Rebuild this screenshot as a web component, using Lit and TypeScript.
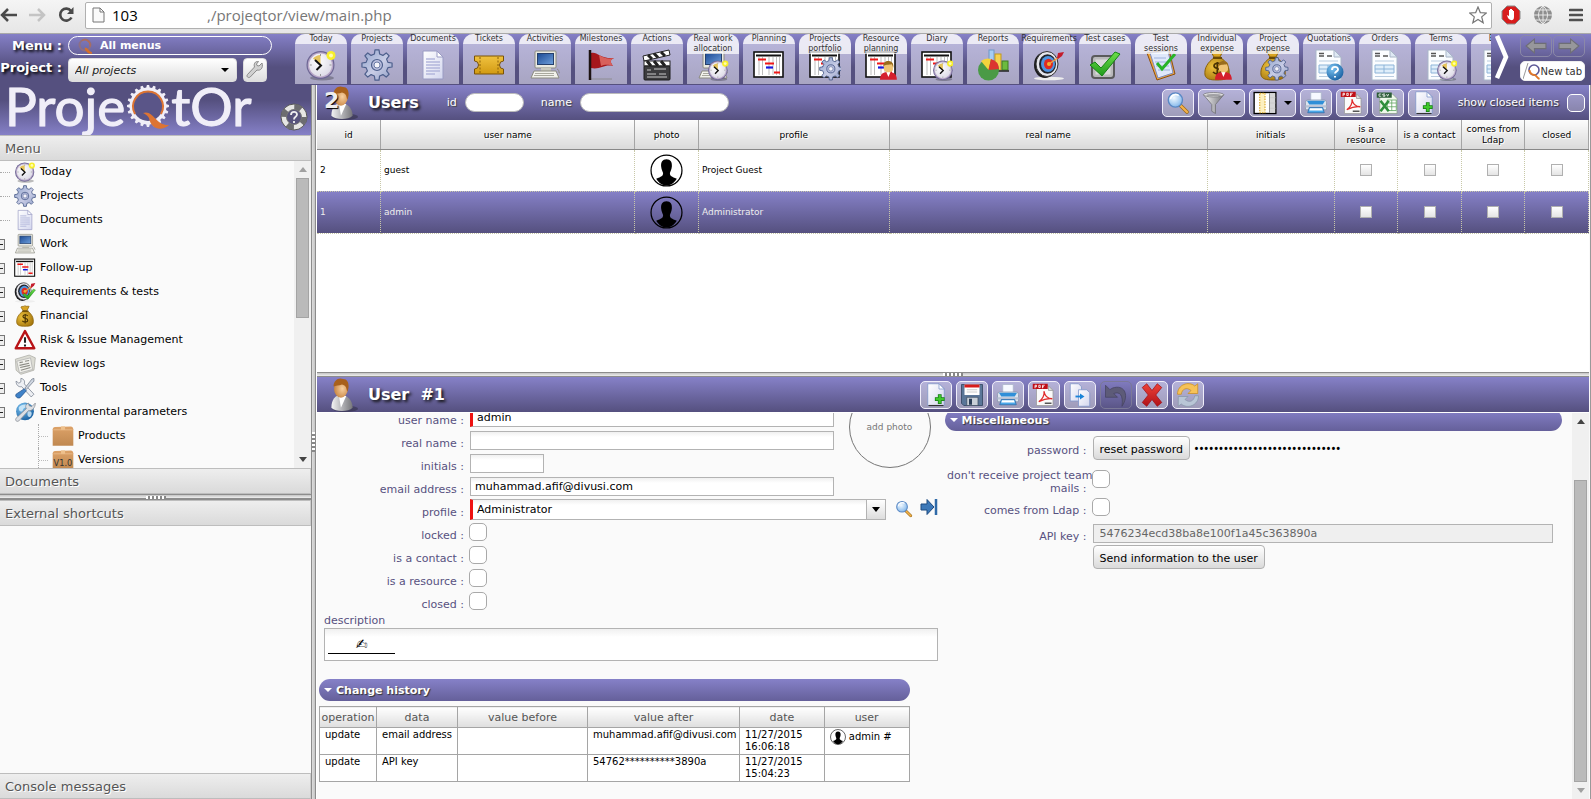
import { LitElement, html, svg, css, nothing, TemplateResult, SVGTemplateResult } from "lit";
import { customElement, state } from "lit/decorators.js";

type Art = SVGTemplateResult;

// Shared gradients, referenced by every drawing of the component.
const gradients = html`<svg class="defs" width="0" height="0" aria-hidden="true">
  <defs>
    <linearGradient id="gGear" x1="0" y1="0" x2="1" y2="1"><stop offset="0" stop-color="#8fa3cc" /><stop offset=".55" stop-color="#c9cde6" /><stop offset="1" stop-color="#8d9cc4" /></linearGradient>
    <linearGradient id="gPage" x1="0" y1="0" x2="1" y2="1"><stop offset="0" stop-color="#ffffff" /><stop offset="1" stop-color="#d3d6ee" /></linearGradient>
    <linearGradient id="gGold" x1="0" y1="0" x2="0" y2="1"><stop offset="0" stop-color="#f0c240" /><stop offset="1" stop-color="#d29a12" /></linearGradient>
    <linearGradient id="gScreen" x1="0" y1="0" x2="1" y2="1"><stop offset="0" stop-color="#1c4a94" /><stop offset="1" stop-color="#6fa0dc" /></linearGradient>
    <linearGradient id="gRed" x1="0" y1="0" x2="0" y2="1"><stop offset="0" stop-color="#ee4238" /><stop offset="1" stop-color="#b01218" /></linearGradient>
    <linearGradient id="gGreen" x1="0" y1="0" x2="0" y2="1"><stop offset="0" stop-color="#6ee04a" /><stop offset="1" stop-color="#1f9a1c" /></linearGradient>
    <linearGradient id="gSteel" x1="0" y1="0" x2="1" y2="0"><stop offset="0" stop-color="#f4f4f4" /><stop offset=".5" stop-color="#b4b4b8" /><stop offset="1" stop-color="#76767a" /></linearGradient>
    <linearGradient id="gBox" x1="0" y1="0" x2="0" y2="1"><stop offset="0" stop-color="#dda268" /><stop offset="1" stop-color="#c08850" /></linearGradient>
    <radialGradient id="gFace" cx=".4" cy=".35" r=".7"><stop offset="0" stop-color="#ffffff" /><stop offset="1" stop-color="#dcdae6" /></radialGradient>
    <radialGradient id="gBag" cx=".35" cy=".4" r=".8"><stop offset="0" stop-color="#eec23c" /><stop offset="1" stop-color="#9a6c08" /></radialGradient>
    <radialGradient id="gLens" cx=".4" cy=".35" r=".7"><stop offset="0" stop-color="#f2f9ff" /><stop offset="1" stop-color="#7db4ea" /></radialGradient>
    <radialGradient id="gBall" cx=".35" cy=".3" r=".8"><stop offset="0" stop-color="#7cc4f2" /><stop offset="1" stop-color="#135a9c" /></radialGradient>
    <radialGradient id="gSkin" cx=".6" cy=".5" r=".7"><stop offset="0" stop-color="#f8d0a0" /><stop offset="1" stop-color="#c07832" /></radialGradient>
  </defs>
</svg>`;

const gearPath = (cx: number, cy: number, r: number, n = 8, depth = 0.26) => {
  const pts: string[] = [];
  const step = (Math.PI * 2) / n;
  for (let i = 0; i < n; i++) {
    const a = i * step - Math.PI / 2;
    for (const [o, k] of [[-0.3, 1 - depth], [-0.17, 1], [0.17, 1], [0.3, 1 - depth]]) {
      const t = a + o * step;
      pts.push(`${(cx + Math.cos(t) * r * k).toFixed(2)} ${(cy + Math.sin(t) * r * k).toFixed(2)}`);
    }
  }
  return `M${pts.join("L")}Z`;
};

const clock: Art = svg`<ellipse cx="17" cy="29" rx="12" ry="2.5" fill="#000" opacity=".25"/>
  <circle cx="15.5" cy="16" r="14" fill="#6d6694"/><circle cx="15.5" cy="16" r="12.8" fill="#b9a8c8"/><circle cx="15.5" cy="16" r="11.4" fill="url(#gFace)"/>
  <path d="M15.5 16V6A10 10 0 0 0 8 9.500Z" fill="#e5c35c"/>
  <path d="M10 11l6 5.500-4.500 4.500" fill="none" stroke="#111" stroke-width="2"/><path d="M15.500 5v2M15.500 25v2M4.800 16h2M24.500 16h2" stroke="#999"/>
  <circle cx="26" cy="6.500" r="4.500" fill="#f7ef2c"/><circle cx="26" cy="6.500" r="2" fill="#fffcb0"/>`;
const gear: Art = svg`<path d="${gearPath(16, 16, 15.2)}" fill="url(#gGear)" stroke="#4d5f8c" stroke-width="1.200" stroke-linejoin="round"/>
  <circle cx="16" cy="16" r="5.500" fill="#b9bede" stroke="#4d5f8c" stroke-width="1.200"/><circle cx="16" cy="16" r="3" fill="#f4f4fa" stroke="#6d7ca6"/>`;
const page: Art = svg`<path d="M6 2h14l6 6v22H6z" fill="url(#gPage)" stroke="#9a9cc4"/><path d="M20 2v6h6z" fill="#fff" stroke="#9a9cc4"/>
  <path d="M9 10h9M9 13h14M9 16h14M9 19h14M9 22h14M9 25h9" stroke="#b3b7dc" stroke-width="1.400"/>`;
const ticket: Art = svg`<path d="M1.500 7h29v5a4 4 0 0 0 0 8v5h-29v-5a4 4 0 0 0 0-8z" fill="url(#gGold)" stroke="#7a5206"/><path d="M7 8v16M25 8v16" stroke="#8a5f08" stroke-dasharray="2 1.500"/>`;
const computer: Art = svg`<rect x="6" y="2" width="21" height="17" rx="1" fill="#e9e9e2" stroke="#8b8b80"/><rect x="8.500" y="4.500" width="16" height="11" fill="url(#gScreen)" stroke="#26406c"/>
  <path d="M12 19h10v3H12z" fill="#c9c9be"/><path d="M5 22h22l3 7H2z" fill="#f2f2ec" stroke="#8b8b80"/><path d="M6 24.500h19M5 26.500h20" stroke="#a9a99e"/><path d="M28 20c3 1 1 4 3 4" fill="none" stroke="#8b8b80"/>`;
const flag: Art = svg`<path d="M5 30h22" stroke="#888" stroke-width="2" opacity=".4"/><path d="M6 4c6-2 9 6 23 5-4 2-4 4-1 8-9-2-13 4-22 2z" fill="#a5171c"/><path d="M14 6c5 3 8 4 15 3-4 2-4 4-1 8-6-2-9-1-12 0z" fill="#d8605c"/><path d="M5 1v30" stroke="#1c1212" stroke-width="2.500"/>`;
const clap: Art = svg`<path d="M2 7l26-6 1 5L3 12z" fill="#fff" stroke="#222"/><path d="M7 6l4 4M13 4.500l4 4M20 3l4 4" stroke="#222" stroke-width="3"/>
  <rect x="3" y="12" width="26" height="5" fill="#fff" stroke="#222"/><path d="M6 12l4 5M13 12l4 5M20 12l4 5" stroke="#222" stroke-width="3"/><rect x="3" y="17" width="26" height="14" rx="1" fill="#3c3c3e" stroke="#1c1c1c"/><path d="M6 21h4M13 20h12M6 25h9M18 25h7M6 28h20" stroke="#c9c9c9"/>`;
const gantt: Art = svg`<rect x="1" y="3" width="29" height="25" fill="#fff" stroke="#111" stroke-width="1.600"/><path d="M3 6.500h25" stroke="#111" stroke-width="2"/><path d="M6 8v18M9.500 8v18M20 8v18M23.500 8v18M26.500 8v18M16 8v18" stroke="#bdbdbd"/>
  <path d="M5 10.500h8M12 14.500h9M21 23.500h6" stroke="#f01818" stroke-width="2.200"/><path d="M13 18.500h7" stroke="#1818e0" stroke-width="2.200"/>`;
const personMini: Art = svg`<path d="M10 31c0-8 4-11 12-11s12 3 12 11z" fill="#d51f2c"/><path d="M19 20l3 7 3-7z" fill="#fff"/><path d="M15.500 10c0-7 12-7 13 0v6c0 6-12 6-13 0z" fill="#f0c474"/><path d="M15 12c-2-9 13-11 14-2v4l-2-5c-5 1-10 0-12 3z" fill="#9a6c1c"/>`;
const mini = (a: Art, x = 12, y = 12, k = 0.62): Art => svg`<g transform="translate(${x} ${y}) scale(${k})">${a}</g>`;
const chart: Art = svg`<rect x="12" y="1" width="5" height="16" fill="#a7cdf4" stroke="#6c98c8"/><rect x="18" y="5" width="6" height="16" fill="#f6d251" stroke="#c19a1c"/><rect x="25" y="12" width="6" height="9" fill="#6cbb3f" stroke="#3e7d20"/><path d="M20 22h12" stroke="#222" stroke-width="1.500"/>
  <circle cx="11.500" cy="21" r="10.500" fill="#4a9a46"/><path d="M11.500 21L4 12a11 11 0 0 1 10-2z" fill="#f5d33c"/><path d="M11.500 21L14 10a11 11 0 0 1 8 10z" fill="#dc3430"/>`;
const target: Art = svg`<ellipse cx="16" cy="29.500" rx="15" ry="1.800" fill="#eee"/><ellipse cx="12" cy="16" rx="11" ry="13" fill="#1c1c1e"/><ellipse cx="14" cy="15" rx="11" ry="12.500" fill="#e6e6ec" stroke="#333"/><ellipse cx="14.500" cy="15" rx="8.500" ry="9.800" fill="#20242c"/><ellipse cx="15" cy="15" rx="7" ry="8" fill="#4f94e0"/><ellipse cx="15.500" cy="15" rx="4.500" ry="5.300" fill="#e02a22"/><circle cx="16" cy="15" r="2" fill="#f2b32c"/>
  <path d="M16 15l10-7" stroke="#f0a040" stroke-width="1.500"/><path d="M24 9l1-5 6-1-2 4-4 3z" fill="#c41c2c"/>`;
const check: Art = svg`<path d="M1 16l5-3 6 6L26 3l5 2-18 22z" fill="url(#gGreen)" stroke="#178316"/>`;
const tick: Art = svg`<rect x="3" y="7" width="22" height="22" rx="3" fill="#b9b9bb" stroke="#5a5a5c" stroke-width="2"/><rect x="6.500" y="10.500" width="15" height="15" fill="#d9d9da"/>${check}`;
const notebook: Art = svg`<path d="M2 4l22-3 6 24-18 6z" fill="#f0a83c" stroke="#8d4e10"/><path d="M5 4l18-2 5 22-15 5z" fill="#dfe8fb" stroke="#7c8ac0"/><path d="M9 9h12M10 13h13M11 17h13M13 21h12" stroke="#9fb2dc"/><path d="M12 14l5 6L30 5" fill="none" stroke="#28b428" stroke-width="3"/>`;
const bag: Art = svg`<path d="M10 3c2-2 4 0 6-2 2 2 4 0 6 1l-3 6h-6z" fill="#d9a422" stroke="#8a6208"/><path d="M13 9h7c6 4 9 10 8 17-1 4-5 5-12 5s-11-1-12-5c-1-7 3-13 9-17z" fill="url(#gBag)" stroke="#8a6208"/><path d="M12 9h9" stroke="#6b4a04" stroke-width="2"/>
  <path d="M20 16c-2-3-7-2-7 1s7 2 7 5-5 4-8 1M16.300 13v14" fill="none" stroke="#4a3404" stroke-width="1.700"/>`;
const invoice: Art = svg`<path d="M3 1h18l7 7v23H3z" fill="#fbfdff" stroke="#a9b6c8"/><path d="M21 1v7h7z" fill="#dfe9f4" stroke="#a9b6c8"/><path d="M6 4.500h5M6 7h5M14 7h5" stroke="#555" stroke-width="1.500"/><path d="M6 16h19v8H6zM6 20h19M15 16v8" fill="#dfeefa" stroke="#8db4d8"/><path d="M6 12h19M6 27.500h19" stroke="#b9cce0"/>`;
const help: Art = svg`<circle cx="22" cy="23" r="8.500" fill="url(#gBall)"/><path d="M19 21c0-4 6-4 6-.6 0 2-3 2-3 4.200M22 27v1.600" fill="none" stroke="#fff" stroke-width="1.900"/>`;
const lens: Art = svg`<path d="M19 19l9 9" stroke="#9a6a1a" stroke-width="5" stroke-linecap="round"/><path d="M20 20l8 8" stroke="#f4b24a" stroke-width="3" stroke-linecap="round"/><circle cx="12.500" cy="12" r="9.500" fill="url(#gLens)" stroke="#5a88c4" stroke-width="1.800"/><path d="M6 11a7 7 0 0 1 11-5" fill="none" stroke="#fff" stroke-width="2"/>`;
const funnel: Art = svg`<path d="M2 5h27L18 18v12l-5-3v-9z" fill="url(#gSteel)" stroke="#6d6d70"/><ellipse cx="15.500" cy="5" rx="13.500" ry="3" fill="#dededf" stroke="#7a7a7e"/><ellipse cx="15.500" cy="5.500" rx="10" ry="1.600" fill="#a0a0a4"/>`;
const columns: Art = svg`<rect x="1.500" y="2" width="29" height="28" fill="#fff" stroke="#000" stroke-width="1.800"/><path d="M22 9h8M22 16h8M22 23h8" stroke="#aaa"/><path d="M22 3h7.500v26H22z" fill="#ccc" opacity=".8"/><path d="M22 3v26" stroke="#777"/><path d="M9 3h7v26H9z" fill="#fdf0c0" stroke="#d9a21c" stroke-dasharray="2 1.500" stroke-width="1.400"/>`;
const printer: Art = svg`<path d="M9 2h14v11H9z" fill="#f6f9ff" stroke="#aab4c8"/><path d="M2 15q0-3 3-3h22q3 0 3 3v10H2z" fill="#dde4ee" stroke="#8793a8"/><path d="M4 13h24l-3 5H7z" fill="#2f8fd8"/><path d="M2 19h28v3H2z" fill="#b7c2d4"/><path d="M7 22h18l2 7H5z" fill="#4aa8ea" stroke="#2a6aa8"/><path d="M8 23h16l1 3H7z" fill="#fff"/>`;
const pdf: Art = svg`<path d="M6 4h16l6 6v20H6z" fill="#fafafa" stroke="#999"/><path d="M22 4v6h6z" fill="#ddd" stroke="#999"/><path d="M1 1h20v7H1z" fill="#c01018"/><path d="M4 7V3h2v2H4M9 3v3h2V3zM14 7V3h3M14 5h2" fill="none" stroke="#fff" stroke-width="1.100"/><path d="M9 25c5-3 8-9 7-14 1 6 5 10 11 10-7-1-12 1-18 4z" fill="none" stroke="#e02a2a" stroke-width="1.700"/><path d="M17 27h9" stroke="#555" stroke-width="2"/>`;
const csv: Art = svg`<path d="M5 4h17l6 6v20H5z" fill="#eef8ea" stroke="#8a9c88"/><path d="M1 2h20v7H1z" fill="#2c5c38"/><path d="M7 4H4v3h3M12 4h-3v1.500h3V7H9M14 4l1.500 3L17 4" fill="none" stroke="#fff"/><path d="M15 12h12v14H15zM15 16h12M15 21h12M21 12v14" fill="#fff" stroke="#58a058"/><path d="M6 13l11 14M17 13L6 27" stroke="#2f8f3c" stroke-width="3.500"/>`;
const plusPage: Art = svg`<path d="M5 1h15l7 7v22H5z" fill="url(#gPage)" stroke="#7b93c8"/><path d="M20 1v7h7z" fill="#fff" stroke="#7b93c8"/><path d="M6 30h20" stroke="#333" stroke-width="1.500"/><path d="M21 15v13M14.500 21.500h13" stroke="#157c12" stroke-width="5"/><path d="M21 16v11M15.500 21.500h11" stroke="#3fc82c" stroke-width="3"/>`;
const floppy: Art = svg`<path d="M2 2h28v28H5l-3-3z" fill="#5a7698" stroke="#2b3e58"/><path d="M6 2h20v14H6z" fill="#fff"/><path d="M6 2h20v4H6z" fill="#d81c1c"/><path d="M9 9h14M9 12h14" stroke="#bbb"/><path d="M9 19h15v11H9z" fill="#c9d0d8" stroke="#3c4c60"/><path d="M12 21h4v8h-4z" fill="#2b3e58"/>`;
const copy: Art = svg`<path d="M3 1h11l4 4v19H3z" fill="url(#gPage)" stroke="#7b93c8"/><path d="M14 9h11l4 4v18H14z" fill="url(#gPage)" stroke="#7b93c8"/><path d="M10 18h7" stroke="#1a84d8" stroke-width="2.500"/><path d="M16 14l6 4-6 4z" fill="#1a84d8"/>`;
const undo: Art = svg`<path d="M2 3v16h16l-5-5c8-3 13 2 11 17 9-13 5-28-10-25-3 .5-5 2-6 3z" fill="#5d5b78" stroke="#454362"/>`;
const cross: Art = svg`<path d="M3 6l6-5 7 9 7-9 6 5-8 10 8 10-6 5-7-9-7 9-6-5 8-10z" fill="url(#gRed)" stroke="#a01018"/>`;
const refresh: Art = svg`<path d="M2 15C2 2 17-3 25 4l4-3v13H16l4-4C14 5 8 8 7 15z" fill="#f6c258" stroke="#c98e20"/><path d="M30 17c0 13-15 18-23 11l-4 3V18h13l-4 4c6 5 12 2 13-5z" fill="#b9c6d6" stroke="#8795a8"/>`;
const warning: Art = svg`<path d="M16 3l13.500 25h-27z" fill="#fff" stroke="#b81418" stroke-width="3.500" stroke-linejoin="round"/><path d="M16 12v8M16 22.500v3" stroke="#222" stroke-width="3"/>`;
const newspaper: Art = svg`<path d="M2 9l20-6 9 4-2 18-19 6-7-6z" fill="#dcdcd4" stroke="#a8a8a0"/><path d="M4 12l20-5 3 17-19 5z" fill="#f1f1ec" stroke="#aaa"/><path d="M8 14l5-1M16 12l6-1M8 18l14-3M9 21l14-3M10 25l14-4" stroke="#8b8b84" stroke-width="1.500"/>`;
const tools: Art = svg`<path d="M3 6l4 3 3-2V2c5 1 6 4 5 8l14 15-4 4L11 14c-4 1-8-2-8-8z" fill="#eef0f4" stroke="#6b7484"/><path d="M29 2l-3 1-10 13 2 2L29 6z" fill="#cfd6e0" stroke="#6b7484"/><path d="M15 17l3 3-9 10c-4 2-8-2-6-5z" fill="#3f82c8" stroke="#1f4c84"/>`;
const globeTool: Art = svg`<circle cx="16" cy="15" r="13" fill="url(#gBall)"/><path d="M7 9c4-5 11-5 13-2-2 4-6 2-7 6s-7 3-6-4zM20 15c5-1 7 2 5 6s-7 3-5-6z" fill="#d9edfa" opacity=".8"/><path d="M31 3l-5 5-4-1-1-4c-4 2-5 5-3 8L3 25c-2 3 1 6 4 4l14-15c5 1 10-4 10-11z" fill="#dcdfe4" stroke="#81868e"/>`;
const box = (label?: string): Art => svg`<path d="M1 6q0-2 3-3l24-1q3 1 3 4v24H1z" fill="url(#gBox)"/><path d="M2 7h28" stroke="#f0c494"/><path d="M13 2h6v5h-6z" fill="#eec08c"/>${label ? svg`<text class="boxlabel" x="16" y="24" text-anchor="middle">${label}</text>` : nothing}`;
const userArt: Art = svg`<ellipse cx="19" cy="29" rx="12" ry="3" fill="#111" opacity=".3"/><path d="M6 28c0-8 4-12 9-12s11 4 11 12c-4 4-16 4-20 0z" fill="url(#gSteel)"/><path d="M13 16l2 12 5-11z" fill="#fff"/><ellipse cx="15" cy="10" rx="6.500" ry="8.500" fill="url(#gSkin)"/><path d="M8 8c0-6 5-9 9-7 6 0 6 8 4 12-1-4-1-6-5-7-3 1-6 1-8 2z" fill="#a8601c"/>`;
const silhouette: Art = svg`<circle cx="16" cy="16" r="15" fill="none" stroke="#000" stroke-width="1.200"/><path d="M16 5c4 0 5.500 3 5.200 7-.3 3-1.600 5-1.900 6.500 0 3 1.700 3.600 6.700 5.500-2.500 4-6 6.500-10 6.500S8.500 28 6 24c5-1.900 6.700-2.500 6.700-5.500C12.400 17 11.100 15 10.800 12 10.500 8 12 5 16 5z" fill="#000"/>`;

const icon = (art: Art | Art[], size = 32, cls = ""): TemplateResult =>
  html`<svg class="icon ${cls}" viewBox="0 0 32 32" width=${size} height=${size} aria-hidden="true">${art}</svg>`;

const tabs: { label: string; art: Art | Art[] }[] = [
  { label: "Today", art: clock },
  { label: "Projects", art: gear },
  { label: "Documents", art: page },
  { label: "Tickets", art: ticket },
  { label: "Activities", art: computer },
  { label: "Milestones", art: flag },
  { label: "Actions", art: clap },
  { label: "Real work allocation", art: [computer, mini(clock, 10, 10, 0.7)] },
  { label: "Planning", art: gantt },
  { label: "Projects portfolio", art: [gantt, mini(gear, 10, 8, 0.74)] },
  { label: "Resource planning", art: [gantt, mini(personMini, 8, 9, 0.7)] },
  { label: "Diary", art: [gantt, mini(clock, 11, 10, 0.7)] },
  { label: "Reports", art: chart },
  { label: "Requirements", art: target },
  { label: "Test cases", art: tick },
  { label: "Test sessions", art: notebook },
  { label: "Individual expense", art: [bag, mini(personMini, 7, 9, 0.7)] },
  { label: "Project expense", art: [bag, mini(gear, 8, 8, 0.74)] },
  { label: "Quotations", art: [invoice, help] },
  { label: "Orders", art: invoice },
  { label: "Terms", art: [invoice, mini(clock, 11, 10, 0.7)] },
  { label: "Bills", art: invoice },
];

const tree: { label: string; art: Art | Art[]; kind: "leaf" | "node" | "open" | "child" }[] = [
  { label: "Today", art: clock, kind: "leaf" },
  { label: "Projects", art: gear, kind: "leaf" },
  { label: "Documents", art: page, kind: "leaf" },
  { label: "Work", art: computer, kind: "node" },
  { label: "Follow-up", art: gantt, kind: "node" },
  { label: "Requirements & tests", art: [target, mini(check, 12, 10, 0.62)], kind: "node" },
  { label: "Financial", art: bag, kind: "node" },
  { label: "Risk & Issue Management", art: warning, kind: "node" },
  { label: "Review logs", art: newspaper, kind: "node" },
  { label: "Tools", art: tools, kind: "node" },
  { label: "Environmental parameters", art: globeTool, kind: "open" },
  { label: "Products", art: box(), kind: "child" },
  { label: "Versions", art: box("V1.0"), kind: "child" },
];

const gridColumns = [
  ["id", "w5"], ["user name", "w20"], ["photo", "w5"], ["profile", "w15"], ["real name", "w25"],
  ["initials", "w10"], ["is a resource", "w5"], ["is a contact", "w5"], ["comes from Ldap", "w5"], ["closed", "w5"],
];
const users = [
  { id: 2, name: "guest", profile: "Project Guest" },
  { id: 1, name: "admin", profile: "Administrator" },
];
const history = [
  { op: "update", data: "email address", before: "", after: "muhammad.afif@divusi.com", day: "11/27/2015", time: "16:06:18", user: "admin #" },
  { op: "update", data: "API key", before: "", after: "54762**********3890a", day: "11/27/2015", time: "15:04:23", user: "" },
];

@customElement("app-root")
export class AppRoot extends LitElement {
  @state() private selected = 1;

  static styles = css`
    :host { display: flex; flex-direction: column; height: 100vh; overflow: hidden; background: #fafafa; color: #000; font-family: "DejaVu Sans", Verdana, sans-serif; font-size: 11px; --bar: linear-gradient(#8681c8, #55507f); --label: #57517f; }
    * { box-sizing: border-box; }
    button, input, select, textarea { font: inherit; margin: 0; color: inherit; }
    button { padding: 0; }
    a { color: inherit; text-decoration: none; }
    .defs { position: absolute; }
    .icon { display: block; flex: none; }

    .browser { display: flex; align-items: center; height: 34px; flex: none; background: linear-gradient(#f5f5f5, #e6e6e6); border-bottom: 1px solid #a9a9a9; padding: 0 8px 3px 0; }
    .navs { display: flex; margin: 0 4px 0 -6px; }
    .nav { border: 0; background: none; width: 29px; height: 24px; display: grid; place-items: center; }
    .address { flex: 1; display: flex; align-items: center; height: 27px; margin: 0 9px 0 0; padding: 0 4px 0 6px; background: #fff; border: 1px solid #b0b0b0; border-radius: 2px; font: 16px/24px "Open Sans", sans-serif; }
    .address input { border: 0; outline: 0; padding: 0; background: none; width: 26px; margin-left: 7px; font-size: 15px; }
    .path { flex: 1; margin-left: 69px; color: #777; font-size: 15px; }
    .ext { display: flex; align-items: center; gap: 12px; }
    .ext :last-child { margin-left: 4px; }

    .topbar { display: flex; flex: none; height: 51px; background: linear-gradient(#8580c7, #55507f 65%); }
    .selectors { width: 295px; flex: none; display: grid; grid-template-columns: 62px 1fr; column-gap: 6px; row-gap: 2px; align-content: start; padding-top: 2px; color: #fff; }
    .caption { font-weight: bold; font-size: 13px; line-height: 20px; text-align: right; white-space: nowrap; text-shadow: 2px 2px 3px #000; }
    .pill { display: flex; align-items: center; gap: 8px; width: 204px; height: 19px; border: 1px solid #fff; border-radius: 10px; background: none; color: #fff; font-weight: bold; padding: 0 9px; }
    .projectrow { display: flex; gap: 6px; }
    .combo { width: 169px; height: 24px; border: 1px solid #ddd; border-radius: 4px; background: linear-gradient(#fff, #dedede); font-style: italic; color: #222; padding: 0 6px; appearance: none; }
    .combowrap { position: relative; display: flex; }
    .caret { position: absolute; right: 8px; top: 50%; margin-top: -2px; border: 4px solid transparent; border-top-color: #000; border-bottom: 0; pointer-events: none; }
    .square { width: 24px; height: 24px; display: grid; place-items: center; border: 1px solid #ddd; border-radius: 4px; background: linear-gradient(#fff, #dedede); }
    .tabs { flex: 1; min-width: 0; overflow: hidden; display: flex; gap: 4px; }
    .tab { flex: none; width: 52px; height: 50px; border-radius: 10px 10px 0 0; background: linear-gradient(#bab7de, #a8a5c2); display: flex; flex-direction: column; align-items: center; position: relative; overflow: visible; }
    .tab .icon { position: absolute; top: 15px; left: 10px; }
    .tablabel { position: relative; z-index: 1; align-self: stretch; display: flex; justify-content: center; text-align: center; font-size: 8px; line-height: 10px; color: #333; background: rgba(255, 255, 255, 0.72); border-radius: 10px 10px 0 0; }
    .history { flex: none; width: 100px; display: grid; grid-template-columns: 28px 32px 32px; gap: 3px 1px; align-content: start; padding: 1px 0 0; }
    .chevron { grid-row: span 2; align-self: center; justify-self: start; border: 0; background: none; margin-left: 4px; }
    .ghost { height: 22px; border: 1px solid #8b88a8; border-radius: 5px; background: none; display: grid; place-items: center; }
    .newtab { grid-column: span 2; height: 20px; border: 1px solid #eee; border-radius: 5px; background: #fff; color: #333; font-size: 10px; display: flex; align-items: center; justify-content: flex-end; white-space: nowrap; padding-right: 2px; }

    .main { flex: 1; min-height: 0; display: flex; }
    .left { width: 311px; flex: none; display: flex; flex-direction: column; }
    .brand { height: 50px; flex: none; display: flex; justify-content: space-between; background: linear-gradient(#55507f 30%, #8580c7); padding: 0 3px 0 5px; }
    .logo { display: flex; font: 53px/60px Lato, sans-serif; color: #f0eef8; height: 50px; margin-top: -9px; text-shadow: 0 0 1px #f0eef8; -webkit-text-stroke: 1px #f0eef8; }
    .qmark { width: 44px; height: 46px; margin: 9px 0 0 2px; }
    .help { border: 0; background: none; align-self: flex-end; height: 33px; }
    .panelhead { flex: none; height: 26px; border: solid #bdbdbd; border-width: 1px 0; background: linear-gradient(#eee, #dadada); margin: 0; font-size: 13px; font-weight: normal; line-height: 25px; padding-left: 5px; color: #555; text-shadow: 1px 1px 0 #fff; border-right: 1px solid #ccc; }
    .treewrap { flex: 0 0 307px; display: flex; overflow: hidden; }
    .tree { flex: 1; list-style: none; margin: -1px 0 0; padding: 0; }
    .node { height: 24px; display: flex; align-items: center; gap: 4px; }
    .twig { width: 10px; height: 9px; flex: none; display: grid; place-items: center; }
    .leaf .twig { height: 1px; border-top: 1px dotted #aaa; }
    .box { width: 11px; height: 11px; margin-left: -6px; margin-right: 5px; padding: 0; border: 1px solid #777; background: #eee; display: grid; place-items: center; }
    .child { padding-left: 38px; }
    .stem { align-self: stretch; width: 10px; border-left: 1px dotted #aaa; background: linear-gradient(90deg, #bbb 50%, transparent 0) 0 50% / 2px 1px repeat-x; }
    .node .label { padding-bottom: 2px; }
    .boxlabel { font: 12px "DejaVu Sans", sans-serif; fill: #333; }
    .scroll { width: 17px; flex: none; background: #f0f0f0; display: flex; flex-direction: column; align-items: center; }
    .arrow { height: 17px; display: grid; place-items: center; }
    .thumb { width: 13px; background: #bababa; border: 1px solid #a4a4a4; }
    .menuthumb { height: 140px; }
    .gap { height: 50px; }
    .hsplit { height: 5px; flex: none; background: linear-gradient(#8c8c8c 1px, #c4c4c4 1px, #eee 4px, #8c8c8c 4px); display: flex; justify-content: center; align-items: center; }
    .left .hsplit { height: 6px; }
    .grip { width: 20px; height: 3px; background: repeating-linear-gradient(90deg, #fff 0 2px, #888 2px 4px); }
    .vsplit { width: 6px; flex: none; background: linear-gradient(90deg, #8c8c8c 1px, #ddd 1px, #c4c4c4 4px, #8c8c8c 4px, #8c8c8c 5px, #fff 5px); display: flex; align-items: center; }
    .vgrip { width: 3px; height: 20px; margin: 0 1px; background: repeating-linear-gradient(#fff 0 2px, #888 2px 4px); }
    .blank { flex: 1; }

    .right { flex: 1; min-width: 0; display: flex; flex-direction: column; border-right: 1px solid #999; padding-right: 1px; }
    .bar { height: 35px; flex: none; display: flex; align-items: center; background: var(--bar); color: #fff; position: relative; padding-left: 8px; padding-right: 4px; }
    .title { font-size: 16px; font-weight: bold; margin: 0 0 0 9px; text-shadow: 2px 2px 3px #111; white-space: pre; }
    .avatar { position: relative; display: block; }
    .count { position: absolute; left: -1px; top: 2px; font: bold 22px/26px "DejaVu Sans", sans-serif; color: #eee; text-shadow: 1px 1px 1px #000; }
    .search { display: flex; align-items: center; gap: 8px; text-shadow: 1px 1px 1px #444; }
    .search label { margin-left: 17px; }
    .round { height: 19px; border: 1px solid #bbb; border-radius: 10px; background: #fff; padding: 0 8px; color: #000; }
    .short { width: 59px; }
    .long { width: 149px; }
    .first label { margin-left: 28px; }
    .tools { display: flex; gap: 4px; margin-left: auto; }
    .tool { height: 28px; min-width: 32px; display: flex; align-items: center; justify-content: center; gap: 3px; border: 1px solid #f0eefa; border-radius: 5px; background: rgba(255, 255, 255, 0.42); padding: 0 3px; }
    .tool.wide { min-width: 47px; }
    .tool.off { background: none; border-color: #7b7998; }
    .down { border: 4px solid transparent; border-top-color: #000; border-bottom: 0; margin-left: 4px; }
    .closed { display: flex; align-items: center; gap: 8px; margin-left: 18px; text-shadow: 1px 1px 1px #333; }
    .check { appearance: none; width: 18px; height: 18px; flex: none; border: 1px solid #a9a9a9; border-radius: 5px; background: #fff; }
    .closed .check { border-color: #fff; background: rgba(255, 255, 255, 0.25); }

    .listbody { flex: 0 0 252px; background: #fff; }
    .grid { width: 100%; table-layout: fixed; border-collapse: collapse; font-size: 9px; }
    .w5 { width: 5%; } .w10 { width: 10%; } .w15 { width: 15%; } .w20 { width: 20%; } .w25 { width: 25%; }
    .grid th { height: 29px; padding: 2px 4px 0; font-weight: normal; line-height: 11px; background: linear-gradient(#fcfcfc, #dadada); border-right: 1px solid #a5a5a5; border-bottom: 1px solid #888; text-shadow: 1px 1px 0 #fff; }
    .grid td { height: 42px; padding: 0 3px; border-right: 1px dotted #c8c8a8; border-bottom: 1px dotted #c8c8a8; }
    .grid tr.on { background: var(--bar); color: #eee; }
    .grid td.mid { text-align: center; }
    .grid .icon { margin: 0 auto; }
    .tiny { appearance: none; width: 12px; height: 12px; border: 1px solid #b0b0b0; background: linear-gradient(#fff, #e4e4e4); vertical-align: middle; }

    .detailtools { position: absolute; left: 603px; }
    .detailwrap { flex: 1; min-height: 0; display: flex; border-top: 1px solid #fff; }
    .detail { flex: 1; min-width: 0; overflow: hidden; display: grid; grid-template-columns: 1fr 1fr; align-items: start; }
    .col { min-width: 0; margin-top: -7px; color: var(--label); }
    .top { display: flex; }
    .fields { flex: 1; }
    .row { display: flex; height: 23px; align-items: center; }
    .row > label { width: 147px; flex: none; text-align: right; margin-right: 6px; line-height: 13px; padding-top: 5px; }
    .text { flex: 1; min-width: 0; height: 19px; border: 1px solid #b3b3b3; background: linear-gradient(#f0f0f0, #fff 5px); padding: 0 4px 1px; color: #000; border-radius: 0; }
    .req { border-left: 3px solid #e11; }
    .small { flex: 0 0 74px; }
    .row .check { margin: 0 0 2px -1px; }
    .photo { width: 82px; height: 82px; margin: -20px 14px 0 15px; border: 1px solid #777; border-radius: 50%; background: none; color: #777; font-size: 9px; padding: 0; }
    .profile { padding-right: 7px; }
    .pick { flex: 1; position: relative; display: flex; margin-right: 2px; }
    .pick select { flex: 1; appearance: none; height: 21px; }
    .drop { position: absolute; right: 1px; top: 1px; bottom: 1px; width: 19px; border-left: 1px solid #b3b3b3; background: linear-gradient(#fff, #ddd); display: grid; place-items: center; pointer-events: none; }
    .drop i { border: 4px solid transparent; border-top: 5px solid #000; border-bottom: 0; }
    .link { border: 0; background: none; margin-left: 7px; padding-bottom: 2px; }
    .descr { margin: 1px 7px 0; display: flex; flex-direction: column; line-height: 13px; gap: 1px; }
    .editor { height: 33px; border: 1px solid #b3b3b3; background: linear-gradient(#f0f0f0, #fff 8px); padding: 6px 3px; display: flex; color: #000; }
    .sign { width: 67px; height: 19px; border: 0; border-bottom: 1px solid #000; background: none; padding: 0; text-align: center; font-size: 14px; line-height: 18px; }
    .section { height: 22px; display: flex; align-items: center; gap: 4px; border: 0; border-radius: 11px; background: linear-gradient(#8681c8, #65609a); color: #fff; font-weight: bold; text-shadow: 1px 1px 1px #333; padding: 0 5px; }
    .section i { border: 4px solid transparent; border-top-color: #fff; border-bottom: 0; }
    .hist { margin: 18px 35px 0 2px; display: flex; flex-direction: column; gap: 5px; }
    .log { width: 100%; table-layout: fixed; border-collapse: collapse; font-size: 10px; color: #000; background: #fff; }
    .log th { font-weight: normal; font-size: 11px; height: 21px; padding: 0; color: #555; background: linear-gradient(#fff, #dedede); border: 1px solid #a5a5a5; }
    .log td { height: 27px; line-height: 12px; padding: 1px 3px 1px 5px; vertical-align: top; border: 1px solid #a5a5a5; white-space: nowrap; }
    .c1 { width: 57px; } .c2 { width: 81px; } .c3 { width: 130px; } .c4 { width: 152px; }
    .who { display: flex; align-items: center; gap: 3px; height: 16px; }

    .misc { padding: 0 10px 0 0; margin-top: -4px; }
    .misc .section { width: 100%; }
    .misc .row > label { width: 142px; }
    .misc .row { padding-right: 9px; }
    .push { height: 24px; padding: 3px 6px 0; border: 1px solid #b0b0b0; border-radius: 4px; background: linear-gradient(#fff, #dadada); color: #000; }
    .misc .tall { height: 34px; }
    .dots { border: 0; background: none; flex: 1; min-width: 0; padding: 0 0 0 4px; color: #000; font: 13px "Noto Sans", sans-serif; }
    .api { background: #efefef; color: #666; padding-left: 6px; }
    .indent { padding-left: 148px; }
    .misc .wide { height: 28px; }
    .misc .two { height: 29px; }
    .misc .two label { width: 148px; margin-right: 0; display: flex; flex-direction: column; align-items: flex-end; white-space: nowrap; }
    .mails { padding-right: 6px; }
  `;

  private panelHead(text: string) {
    return html`<h2 class="panelhead">${text}</h2>`;
  }

  private arrow(up: boolean, strong: boolean) {
    return html`<span class="arrow"><svg width="8" height="5" viewBox="0 0 8 5"><path d=${up ? "M0 5L4 0L8 5Z" : "M0 0L4 5L8 0Z"} fill=${strong ? "#444" : "#a0a0a0"} /></svg></span>`;
  }

  private renderBrowser() {
    return html`<header class="browser">
      <div class="navs">
        <button class="nav" aria-label="Back"><svg width="18" height="14" viewBox="0 0 18 14"><path d="M17 7H2M8 1L2 7l6 6" fill="none" stroke="#4a4a4a" stroke-width="2.500" /></svg></button>
        <button class="nav" aria-label="Forward"><svg width="18" height="14" viewBox="0 0 18 14"><path d="M0 7h15M9 1l6 6-6 6" fill="none" stroke="#c4c4c4" stroke-width="2.500" /></svg></button>
        <button class="nav" aria-label="Reload"><svg width="17" height="16" viewBox="0 0 17 16"><path d="M13.500 10.500A6 6 0 1 1 13 4" fill="none" stroke="#4a4a4a" stroke-width="2.600" /><path d="M15.500 0v7H9z" fill="#4a4a4a" /></svg></button>
      </div>
      <div class="address">
        <svg width="13" height="16" viewBox="0 0 13 16"><path d="M1 1h7l4 4v10H1zM8 1v4h4" fill="#fafafa" stroke="#777" /></svg>
        <input aria-label="Address" value="103" size="3" />
        <span class="path">,/projeqtor/view/main.php</span>
        <svg width="18" height="18" viewBox="0 0 18 18"><path d="M9 1l2.300 5.600 6 .4-4.600 3.900 1.500 5.900L9 13.500l-5.200 3.300 1.500-5.900L.7 7l6-.4z" fill="#fff" stroke="#777" stroke-width="1.200" /></svg>
      </div>
      <div class="ext">
        <svg width="20" height="20" viewBox="0 0 20 20"><path d="M6 1h8l5 5v8l-5 5H6l-5-5V6z" fill="#d81c1c" stroke="#8a8a8a" /><path d="M6 10l2 1V5h1V4h2v1h1v1h1v6c0 5-6 4-7-2z" fill="#fff" /></svg>
        <svg width="20" height="20" viewBox="0 0 20 20"><circle cx="10" cy="10" r="9" fill="#8e8e8e" /><path d="M1 10h18M3 5h14M3 15h14M10 1v18M10 1c-6 5-6 13 0 18M10 1c6 5 6 13 0 18" fill="none" stroke="#e8e8e8" /></svg>
        <svg width="14" height="14" viewBox="0 0 14 14"><path d="M1 2h12M1 7h12M1 12h12" stroke="#505050" stroke-width="2.600" stroke-linecap="round" /></svg>
      </div>
    </header>`;
  }

  private renderTopbar() {
    const q = html`<svg width="14" height="16" viewBox="0 0 14 16"><circle cx="7" cy="7" r="5.500" fill="none" stroke="#8d6f84" stroke-width="2" /><path d="M4 2.500a5.500 5.500 0 0 1 8 6" fill="none" stroke="#b86c50" stroke-width="1.200" /><path d="M7 10c3 0 4 4 7 5-3 1-6-1-7-5z" fill="#d87028" stroke="#d87028" /></svg>`;
    const steel = (d: string) => html`<svg width="22" height="16" viewBox="0 0 21 15"><path d=${d} fill="#97979b" stroke="#6e6e76" /></svg>`;
    return html`<nav class="topbar">
      <div class="selectors">
        <span class="caption">Menu :</span>
        <button class="pill">${q}All menus</button>
        <label class="caption" for="project">Project :</label>
        <div class="projectrow">
          <span class="combowrap"><select id="project" class="combo"><option>All projects</option></select><i class="caret"></i></span>
          <button class="square" aria-label="Project settings"><svg width="18" height="18" viewBox="0 0 18 18"><path d="M16 2l-3 3-2-.5L10.500 3l2-2.500C9 0 7.500 3 8.500 6L1.500 13.500c-1.500 2 .8 4 2.700 2.500L11 9c3.500 1 6.500-2 5-7z" fill="#d0d0d0" stroke="#8a8a8a" /></svg></button>
        </div>
      </div>
      <div class="tabs">${tabs.map((t) => html`<a class="tab" href="#"><span class="tablabel">${t.label}</span>${icon(t.art)}</a>`)}</div>
      <div class="history">
        <button class="chevron" aria-label="More menus"><svg width="14" height="44" viewBox="0 0 14 44"><path d="M2 1l9 21-9 21" fill="none" stroke="#fff" stroke-width="4.500" /></svg></button>
        <button class="ghost" aria-label="Previous item">${steel("M1 7.500L9 1v4h11v5H9v4z")}</button>
        <button class="ghost" aria-label="Next item">${steel("M20 7.500L12 1v4H1v5h11v4z")}</button>
        <button class="newtab"><svg width="18" height="18" viewBox="0 0 18 18"><path d="M0 17L5 1" stroke="#999" /><circle cx="11" cy="8" r="5" fill="none" stroke="#5d5896" stroke-width="1.600" /><path d="M6.500 8a5 5 0 0 0 5 5c2 0 2 3 5 4" fill="none" stroke="#e07828" stroke-width="2" /></svg>New tab</button>
      </div>
    </nav>`;
  }

  private renderLeft() {
    return html`<aside class="left">
      <div class="brand">
        <div class="logo" aria-label="ProjeQtOr">
          <span>Proje</span>
          <svg class="qmark" viewBox="0 0 44 46"><path d="${gearPath(21, 21, 21, 20, 0.12)}" fill="#f0eef8" stroke="none" /><circle cx="21" cy="21" r="15" fill="#5a5588" stroke="none" /><path d="M8 29A15 15 0 1 1 34 29" fill="none" stroke="#dd7433" stroke-width="2" /><path d="M16 28c10-4 13 13 26 12-8 7-18 4-20-7-2-3-4-4-6-5z" fill="#dd7433" stroke="none" /></svg>
          <span>tOr</span>
        </div>
        <button class="help" aria-label="Help"><svg width="28" height="28" viewBox="0 0 28 28"><circle cx="14" cy="14" r="13" fill="#e6e6e4" stroke="#555" /><circle cx="14" cy="14" r="10" fill="none" stroke="#6c6c70" stroke-width="6" stroke-dasharray="7 8.700" /><circle cx="14" cy="14" r="7.500" fill="#57537c" stroke="#777" /><path d="M11 12c0-4 6-4 6-.5 0 2.500-3 2-3 5M14 18v2" fill="none" stroke="#eee" stroke-width="1.800" /></svg></button>
      </div>
      ${this.panelHead("Menu")}
      <div class="treewrap">
        <ul class="tree">
          ${tree.map((n) => html`<li class="node ${n.kind}">
            ${n.kind === "leaf" ? html`<span class="twig"></span>` : n.kind === "child" ? html`<span class="stem"></span>` : html`<button class="box" aria-label=${"Toggle " + n.label}><svg width="7" height="7" viewBox="0 0 7 7"><path d=${n.kind === "node" ? "M0 3.500h7M3.500 1v5" : "M0 3.500h7"} stroke="#222" /></svg></button>`}
            ${icon(n.art, 22)}<a class="label" href="#">${n.label}</a>
          </li>`)}
        </ul>
        <div class="scroll">${this.arrow(true, false)}<div class="thumb menuthumb"></div><span class="blank"></span>${this.arrow(false, true)}</div>
      </div>
      ${this.panelHead("Documents")}
      <div class="hsplit"><span class="grip"></span></div>
      ${this.panelHead("External shortcuts")}
      <div class="blank"></div>
      ${this.panelHead("Console messages")}
    </aside>`;
  }

  private tool(name: string, art: Art, menu = false, off = false) {
    return html`<button class="tool ${menu ? "wide" : ""} ${off ? "off" : ""}" aria-label=${name} ?disabled=${off}>${icon(art, 24)}${menu ? html`<i class="down"></i>` : nothing}</button>`;
  }

  private renderList() {
    return html`<div class="bar">
        <span class="avatar">${icon(userArt, 34)}<span class="count">2</span></span>
        <h1 class="title">Users</h1>
        <div class="search first"><label for="fid">id</label><input id="fid" class="round short" /></div>
        <div class="search"><label for="fname">name</label><input id="fname" class="round long" /></div>
        <div class="tools">
          ${this.tool("Search", lens)}${this.tool("Filter", funnel, true)}${this.tool("Columns", columns, true)}${this.tool("Print", printer)}${this.tool("Export to PDF", pdf)}${this.tool("Export to CSV", csv)}${this.tool("New user", plusPage)}
        </div>
        <label class="closed">show closed items<input type="checkbox" class="check" /></label>
      </div>
      <div class="listbody">
        <table class="grid">
          <thead><tr>${gridColumns.map(([t, w]) => html`<th class=${w}>${t}</th>`)}</tr></thead>
          <tbody>
            ${users.map((u) => html`<tr class=${u.id === this.selected ? "on" : ""} @click=${() => (this.selected = u.id)}>
              <td>${u.id}</td><td>${u.name}</td><td>${icon(silhouette, 33)}</td><td>${u.profile}</td><td></td><td></td>
              ${["is a resource", "is a contact", "comes from Ldap", "closed"].map((f) => html`<td class="mid"><input type="checkbox" class="tiny" disabled aria-label=${f} /></td>`)}
            </tr>`)}
          </tbody>
        </table>
      </div>`;
  }

  private renderDetail() {
    return html`<div class="hsplit"><span class="grip"></span></div>
      <div class="bar">
        ${icon(userArt, 34)}
        <h1 class="title">${"User  #1"}</h1>
        <div class="tools detailtools">
          ${this.tool("New", plusPage)}${this.tool("Save", floppy)}${this.tool("Print", printer)}${this.tool("PDF", pdf)}${this.tool("Copy", copy)}${this.tool("Undo", undo, false, true)}${this.tool("Delete", cross)}${this.tool("Refresh", refresh)}
        </div>
      </div>
      <div class="detailwrap">
        <div class="detail">
          <div class="col">
            <div class="top">
              <div class="fields">
                <div class="row"><label for="u">user name :</label><input id="u" class="text req" value="admin" /></div>
                <div class="row"><label for="r">real name :</label><input id="r" class="text" /></div>
                <div class="row"><label for="i">initials :</label><input id="i" class="text small" /></div>
                <div class="row"><label for="e">email address :</label><input id="e" class="text" value="muhammad.afif@divusi.com" /></div>
              </div>
              <button class="photo">add photo</button>
            </div>
            <div class="row profile">
              <label for="p">profile :</label>
              <span class="pick"><select id="p" class="text req"><option>Administrator</option></select><span class="drop"><i></i></span></span>
              <button class="link" aria-label="Search profile">${icon(lens, 18)}</button>
              <button class="link" aria-label="Go to profile"><svg width="18" height="18" viewBox="0 0 18 18"><path d="M1 6h6V1.500L14 9l-7 7.500V12H1z" fill="#3c78b8" stroke="#1d4a80" /><path d="M16 1v16" stroke="#2f6aa8" stroke-width="2.500" /></svg></button>
            </div>
            ${["locked", "is a contact", "is a resource", "closed"].map((l, n) => html`<div class="row"><label for=${"k" + n}>${l} :</label><input id=${"k" + n} type="checkbox" class="check" /></div>`)}
            <div class="descr"><span id="dl">description</span><div class="editor"><button class="sign" aria-labelledby="dl">✍</button></div></div>
            <div class="hist">
              <button class="section"><i></i>Change history</button>
              <table class="log">
                <thead><tr><th class="c1">operation</th><th class="c2">data</th><th class="c3">value before</th><th class="c4">value after</th><th>date</th><th>user</th></tr></thead>
                <tbody>${history.map((h) => html`<tr><td>${h.op}</td><td>${h.data}</td><td>${h.before}</td><td>${h.after}</td><td>${h.day}<br />${h.time}</td><td>${h.user ? html`<span class="who">${icon(silhouette, 16)}${h.user}</span>` : nothing}</td></tr>`)}</tbody>
              </table>
            </div>
          </div>
          <div class="col misc">
            <button class="section"><i></i>Miscellaneous</button>
            <div class="row tall"><label for="pw">password :</label><button class="push">reset password</button><input id="pw" class="dots" type="password" readonly value="012345678901234567890123456789" /></div>
            <div class="row two"><label for="m"><span>don't receive project team</span><span class="mails">mails :</span></label><input id="m" type="checkbox" class="check" /></div>
            <div class="row wide"><label for="l">comes from Ldap :</label><input id="l" type="checkbox" class="check" /></div>
            <div class="row"><label for="a">API key :</label><input id="a" class="text api" readonly value="5476234ecd38ba8e100f1a45c363890a" /></div>
            <div class="row indent"><button class="push">Send information to the user</button></div>
          </div>
        </div>
        <div class="scroll">${this.arrow(true, true)}<span class="gap"></span><div class="thumb blank"></div>${this.arrow(false, false)}</div>
      </div>`;
  }

  render() {
    return html`${gradients}${this.renderBrowser()}${this.renderTopbar()}
      <div class="main">
        ${this.renderLeft()}
        <div class="vsplit"><span class="vgrip"></span></div>
        <section class="right">${this.renderList()}${this.renderDetail()}</section>
      </div>`;
  }
}
